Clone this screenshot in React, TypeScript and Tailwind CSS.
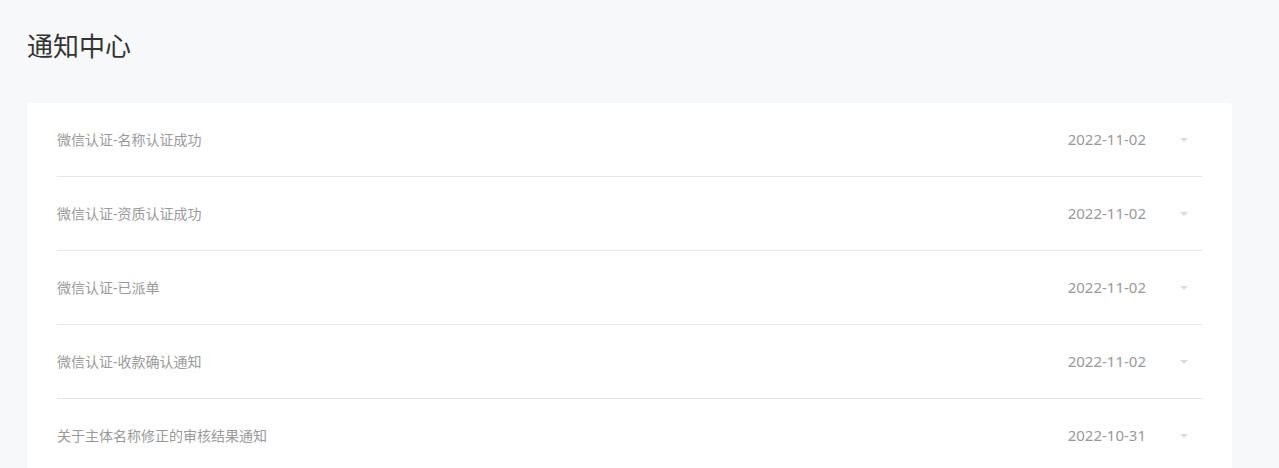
import React from "react";

const items = [
  { title: "微信认证-名称认证成功", date: "2022-11-02" },
  { title: "微信认证-资质认证成功", date: "2022-11-02" },
  { title: "微信认证-已派单", date: "2022-11-02" },
  { title: "微信认证-收款确认通知", date: "2022-11-02" },
  { title: "关于主体名称修正的审核结果通知", date: "2022-10-31" },
];

export default function App() {
  return (
    <div
      className="min-h-[468px] bg-[#f7f8fa] px-[27px] pt-[30px] pb-10"
      style={{ fontFamily: '"Noto Sans", "Noto Sans CJK SC", sans-serif' }}
    >
      <h1 className="text-[26px] leading-[32px] text-[#333] font-normal">通知中心</h1>
      <div className="mt-[41px] w-[1205px] rounded-[4px] bg-white px-[30px]">
        {items.map((it, i) => (
          <div
            key={i}
            className="flex h-[74px] items-center border-b border-[#e6e6e6] text-[14px] text-[#9a9a9a]"
          >
            <div className="flex-1">{it.title}</div>
            <div className="text-[15px] text-[#999]">{it.date}</div>
            <div className="ml-[34px] mr-[14px] flex w-[8px] justify-center">
              <div className="h-0 w-0 border-x-[4px] border-t-[4px] border-x-transparent border-t-[#dcdcdc]" />
            </div>
          </div>
        ))}
      </div>
    </div>
  );
}
